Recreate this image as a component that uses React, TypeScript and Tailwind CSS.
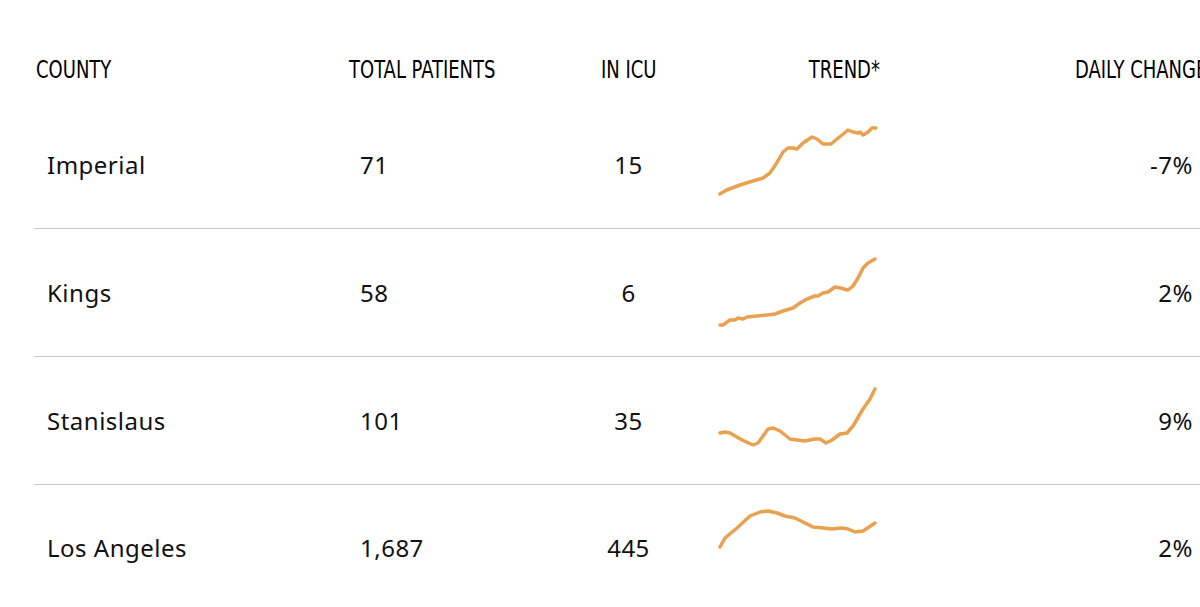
import React from "react";

// ─── Data ─────────────────────────────────────────────────────────────────────

interface CountyRow {
  county: string;
  total: string;
  icu: string;
  change: string;
  trend: [number, number][];
}

const ROWS: CountyRow[] = [
  {
    county: "Imperial",
    total: "71",
    icu: "15",
    change: "-7%",
    trend: [
      [4, 71], [10.7, 67], [24, 62], [37, 58], [47, 55], [54, 50], [60.7, 40],
      [67, 29], [72, 25], [77, 25], [81, 26], [87, 20], [96, 14], [101, 16],
      [107, 21], [115, 21], [121, 16], [126, 12], [132, 7], [137, 9], [142, 10],
      [144, 9], [147, 12], [152, 9], [156, 5], [160, 5],
    ],
  },
  {
    county: "Kings",
    total: "58",
    icu: "6",
    change: "2%",
    trend: [
      [4, 74], [7, 74], [14, 69], [19, 69], [22, 67], [27, 68], [31, 66],
      [41, 65], [51, 64], [59, 63], [67, 60], [77, 57], [84, 52], [91, 48],
      [99, 45], [102, 45], [107, 42], [112, 41], [119, 36], [124, 37], [132, 39],
      [137, 35], [142, 27], [147, 17], [152, 12], [159, 8],
    ],
  },
  {
    county: "Stanislaus",
    total: "101",
    icu: "35",
    change: "9%",
    trend: [
      [4, 54], [9, 53], [14, 54], [26, 61], [37, 66], [42, 64], [52, 50],
      [57, 49], [64, 52], [74, 60], [81, 61], [89, 62], [99, 60], [104, 60],
      [110, 64], [116, 61], [124, 55], [131, 54], [137, 47], [147, 30],
      [154, 20], [159, 10],
    ],
  },
  {
    county: "Los Angeles",
    total: "1,687",
    icu: "445",
    change: "2%",
    trend: [
      [4, 41], [9, 32], [21, 22], [34, 10], [44, 6], [52, 5], [61, 7], [69, 10],
      [79, 12], [89, 17], [97, 21], [107, 22], [116, 23], [126, 22], [132, 23],
      [139, 26], [147, 25], [159, 17],
    ],
  },
];

// Condensed column headings: the narrow face is squeezed horizontally
const HEAD_FONT =
  "font-['Liberation_Sans_Narrow','DejaVu_Sans_Condensed',sans-serif] text-[25px] leading-[26px] text-black";
const BODY_FONT =
  "font-['Noto_Sans','Open_Sans',sans-serif] text-[24px] tracking-[0.5px] text-[#111]";

function Head({ children, origin }: { children: React.ReactNode; origin: string }) {
  return <span className={`inline-block whitespace-nowrap scale-x-[0.8] ${origin}`}>{children}</span>;
}

// ─── Sparkline ────────────────────────────────────────────────────────────────

function Sparkline({ points }: { points: [number, number][] }) {
  return (
    <svg width="164" height="84" viewBox="0 0 164 84" className="block">
      <polyline
        points={points.map(([x, y]) => `${x},${y}`).join(" ")}
        fill="none"
        stroke="#e9a04f"
        strokeWidth="3.5"
        strokeLinejoin="round"
        strokeLinecap="round"
      />
    </svg>
  );
}

// ─── App ──────────────────────────────────────────────────────────────────────

export default function App() {
  return (
    <div className="h-[607px] w-[1200px] overflow-hidden bg-white">
      <div className="ml-[34px] w-[1180px]">
        {/* Header */}
        <div className={`flex h-[101px] pt-[57px] ${HEAD_FONT}`}>
          <div className="w-[296px] pl-[2px]">
            <Head origin="origin-left">COUNTY</Head>
          </div>
          <div className="w-[240px] pl-[19px]">
            <Head origin="origin-left">TOTAL PATIENTS</Head>
          </div>
          <div className="w-[117px] text-center">
            <Head origin="origin-center">IN ICU</Head>
          </div>
          <div className="w-[198px] pr-[5px] text-right">
            <Head origin="origin-right">TREND*</Head>
          </div>
          <div className="w-[329px] pl-[190px]">
            <Head origin="origin-left">DAILY CHANGE</Head>
          </div>
        </div>

        {/* Rows */}
        {ROWS.map((row, i) => (
          <div
            key={row.county}
            className={`flex h-[128px] items-center ${BODY_FONT} ${
              i < ROWS.length - 1 ? "border-b border-[#c9c9c9]" : "pb-[3px]"
            }`}
          >
            <div className="w-[296px] pl-[13px]">{row.county}</div>
            <div className="w-[240px] pl-[30px]">{row.total}</div>
            <div className="w-[117px] text-center">{row.icu}</div>
            <div className="w-[198px] pl-[29px]">
              <Sparkline points={row.trend} />
            </div>
            <div className="w-[329px] pr-[21px] text-right">{row.change}</div>
          </div>
        ))}
      </div>
    </div>
  );
}
